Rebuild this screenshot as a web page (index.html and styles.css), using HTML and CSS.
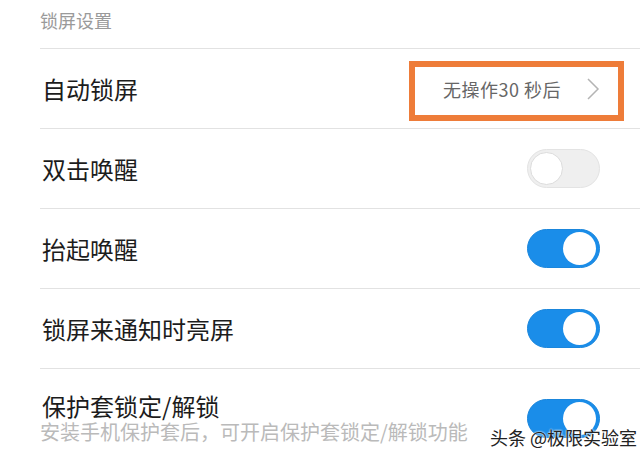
FILE: index.html
```html
<!DOCTYPE html>
<html lang="zh">
<head>
<meta charset="utf-8">
<link rel="stylesheet" href="styles.css">
</head>
<body>
<div class="page">
  <div class="section-title">锁屏设置</div>
  <div class="row">
    <div class="label">自动锁屏</div>
    <div class="value">
      <span class="value-text">无操作30 秒后</span>
      <svg class="chev" width="14" height="24" viewBox="0 0 14 24"><path d="M2 2 L12 12 L2 22" fill="none" stroke="#b4b4b4" stroke-width="1.5"/></svg>
      <div class="highlight"></div>
    </div>
  </div>
  <div class="row">
    <div class="label">双击唤醒</div>
    <div class="switch"><div class="knob"></div></div>
  </div>
  <div class="row">
    <div class="label">抬起唤醒</div>
    <div class="switch on"><div class="knob"></div></div>
  </div>
  <div class="row">
    <div class="label">锁屏来通知时亮屏</div>
    <div class="switch on"><div class="knob"></div></div>
  </div>
  <div class="row last">
    <div class="texts">
      <div class="label">保护套锁定/解锁</div>
      <div class="sub">安装手机保护套后，可开启保护套锁定/解锁功能</div>
    </div>
    <div class="switch on"><div class="knob"></div></div>
  </div>
  <div class="watermark">头条 @极限实验室</div>
</div>
</body>
</html>
```
FILE: styles.css
```css
html, body {
  margin: 0;
  padding: 0;
  background: #fff;
}
body {
  width: 640px;
  height: 458px;
  overflow: hidden;
  font-family: "Noto Sans CJK SC", "Noto Sans", sans-serif;
}
.page {
  position: relative;
  padding-left: 40px;
  height: 458px;
}
.section-title {
  height: 49px;
  box-sizing: border-box;
  padding-top: 8px;
  font-size: 18px;
  line-height: 24px;
  color: #9a9a9a;
  border-bottom: 1px solid #e2e2e2;
}
.row {
  height: 80px;
  box-sizing: border-box;
  border-bottom: 1px solid #e2e2e2;
  display: flex;
  align-items: center;
  justify-content: space-between;
  padding-right: 40px;
}
.row.last {
  border-bottom: none;
  align-items: flex-start;
  padding-top: 24px;
  height: 88px;
}
.label {
  font-size: 24px;
  color: #1c1c1c;
  line-height: 30px;
  padding-left: 2px;
}
.row.last .label {
  line-height: 26px;
}
.sub {
  font-size: 20px;
  color: #bababa;
  line-height: 26px;
  white-space: nowrap;
}
.value {
  position: relative;
  display: flex;
  align-items: center;
  height: 24px;
}
.value-text {
  font-size: 18px;
  letter-spacing: 0.5px;
  color: #666;
  margin-right: 25px;
}
.chev {
  display: block;
}
.highlight {
  position: absolute;
  right: -24px;
  top: -16px;
  width: 215px;
  height: 60px;
  box-sizing: border-box;
  border: 6px solid #ee7c39;
}
.switch {
  width: 73px;
  height: 39px;
  box-sizing: border-box;
  border-radius: 20px;
  background: #efefef;
  border: 1px solid #e3e3e3;
  position: relative;
  flex: none;
}
.switch .knob {
  position: absolute;
  left: 2px;
  top: 2px;
  width: 33px;
  height: 33px;
  box-sizing: border-box;
  border-radius: 50%;
  background: #fff;
  border: 1px solid #dcdcdc;
}
.switch.on {
  background: #1a8de9;
  border-color: #1a86dc;
}
.switch.on .knob {
  left: auto;
  right: 3px;
  border: none;
}
.row.last .switch {
  margin-top: 6px;
}
.watermark {
  position: absolute;
  left: 490px;
  top: 424px;
  font-size: 18px;
  color: #222;
  text-shadow: 0 0 2px #fff, 0 0 2px #fff;
}
```
